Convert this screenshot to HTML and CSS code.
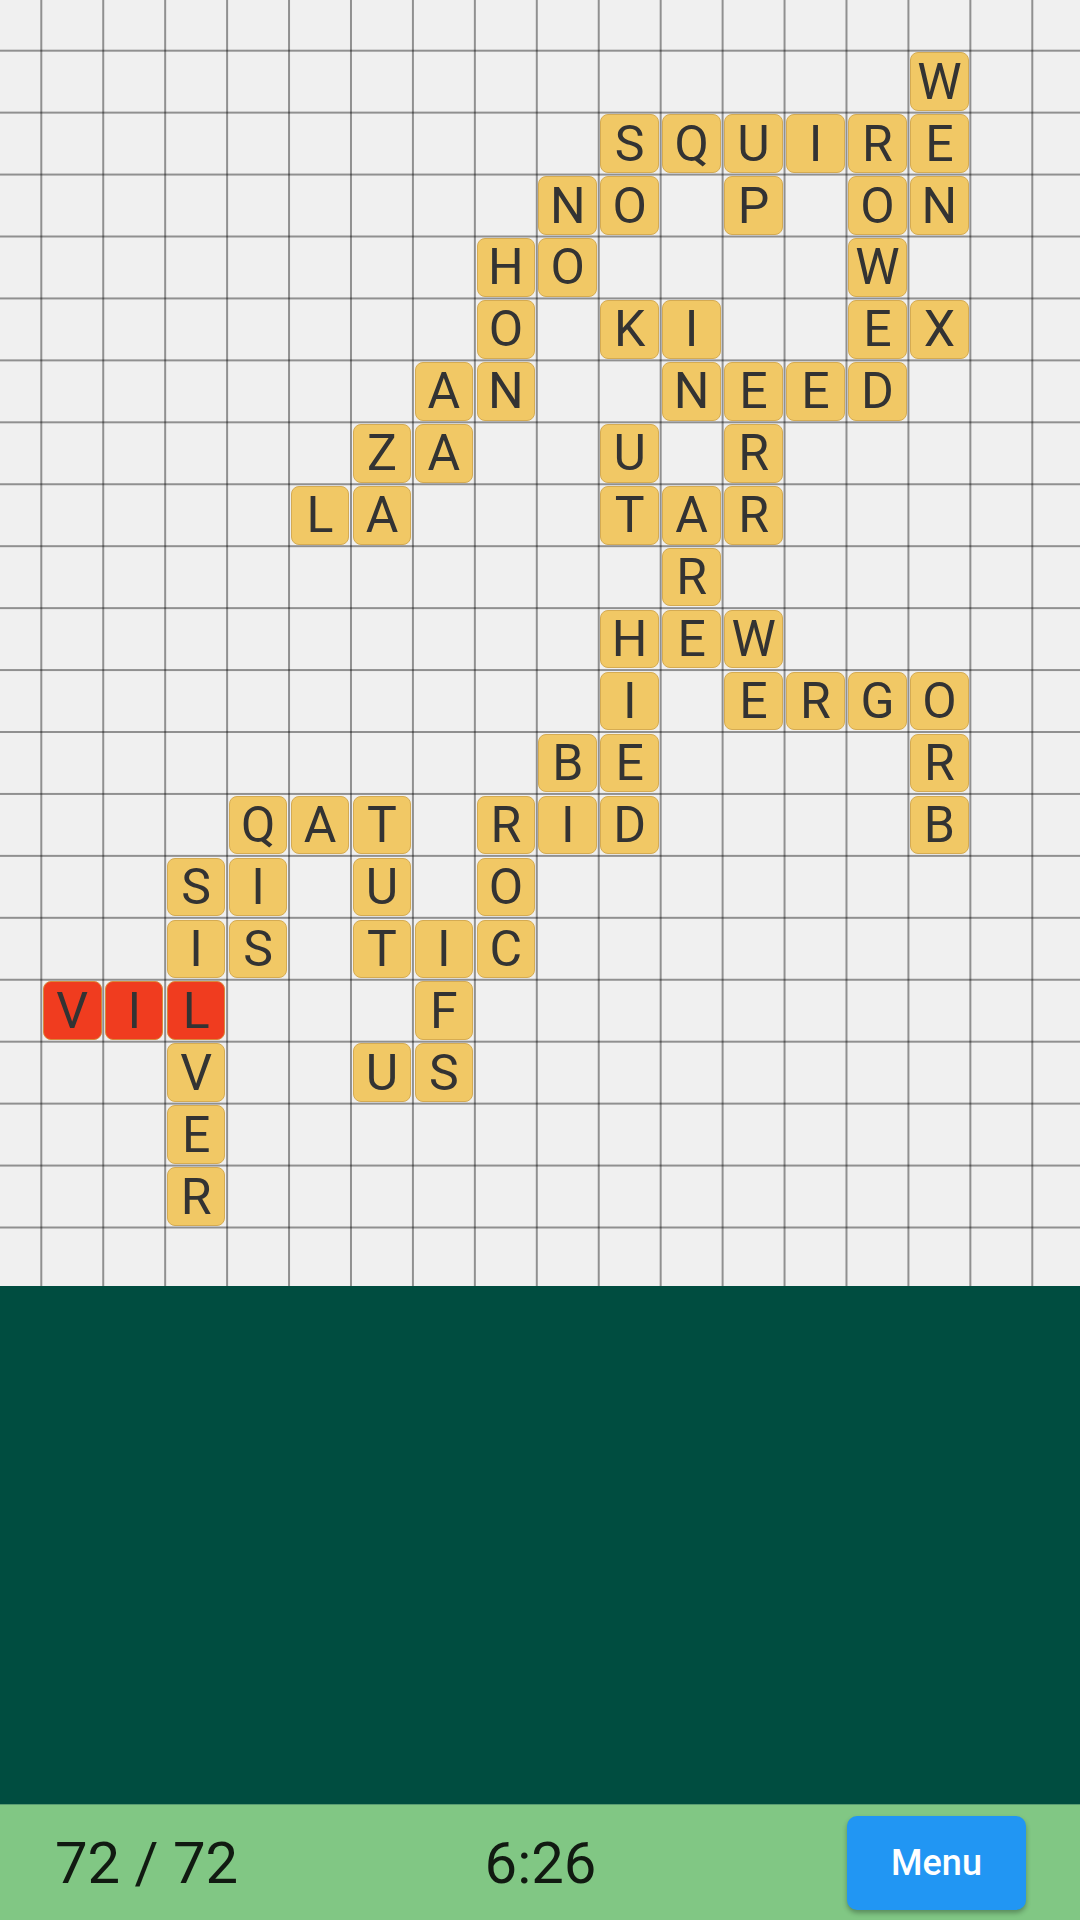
FILE: index.html
```html
<!DOCTYPE html>
<html lang="en">
<head>
    <meta charset="UTF-8">
    <meta name="viewport" content="width=device-width, initial-scale=1.0">
    <title>Word Grid</title>
    <link rel="stylesheet" href="styles.css">
</head>
<body>
    <div class="board" id="board"></div>

    <div class="tray"></div>

    <div class="status-bar">
        <div class="score">72 / 72</div>
        <div class="timer">6:26</div>
        <button class="menu-btn">Menu</button>
    </div>

    <script>
        // '.' is an empty cell, lowercase letters are wrong tiles
        const rows = [
            "..................",
            "...............W..",
            "..........SQUIRE..",
            ".........NO.P.ON..",
            "........HO....W...",
            "........O.KI..EX..",
            ".......AN..NEED...",
            "......ZA..U.R.....",
            ".....LA...TAR.....",
            "...........R......",
            "..........HEW.....",
            "..........I.ERGO..",
            ".........BE....R..",
            "....QAT.RID....B..",
            "...SI.U.O.........",
            "...IS.TIC.........",
            ".vil...F..........",
            "...V..US..........",
            "...E..............",
            "...R..............",
            ".................."
        ];

        const board = document.getElementById("board");

        rows.forEach(row => {
            for (const ch of row) {
                const cell = document.createElement("div");
                cell.className = "cell";
                if (ch !== ".") {
                    const tile = document.createElement("div");
                    tile.className = "tile";
                    if (ch === ch.toLowerCase()) {
                        tile.classList.add("wrong");
                    }
                    tile.textContent = ch.toUpperCase();
                    cell.appendChild(tile);
                }
                board.appendChild(cell);
            }
        });
    </script>
</body>
</html>
```

FILE: styles.css
```css
body {
    margin: 0;
    font-family: Roboto, "Liberation Sans", Arial, sans-serif;
    display: flex;
    flex-direction: column;
    height: 1920px;
    width: 1080px;
    overflow: hidden;
}

.board {
    height: 1286px;
    flex-shrink: 0;
    display: grid;
    grid-template-columns: 41.3px repeat(16, 61.94px) 1fr;
    grid-template-rows: 50.7px repeat(19, 61.94px) 1fr;
    background-color: #f0f0f0;
    background-image:
        linear-gradient(to right, rgba(0, 0, 0, 0.4) 2px, transparent 2px),
        linear-gradient(to bottom, rgba(0, 0, 0, 0.4) 2px, transparent 2px);
    background-size: 61.94px 61.94px;
    background-position: 40.3px 49.7px;
}

.cell {
    padding: 1.7px;
    box-sizing: border-box;
    min-width: 0;
    min-height: 0;
}

.tile {
    height: 100%;
    box-sizing: border-box;
    background: #f1c865;
    border: 1px solid #d5ab52;
    border-radius: 8px;
    display: flex;
    justify-content: center;
    align-items: center;
    font-size: 50px;
    color: #333;
}

.tile.wrong {
    background: #f03c1f;
    border-color: #d9883a;
}

.tray {
    flex: 1;
    background: #004d40;
}

.status-bar {
    height: 116px;
    flex-shrink: 0;
    box-sizing: border-box;
    border-top: 1px solid #5a9c72;
    background: #81c784;
    display: grid;
    grid-template-columns: 1fr auto 1fr;
    align-items: center;
    padding: 0 54px 0 55px;
}

.score,
.timer {
    font-size: 58px;
    color: rgba(0, 0, 0, 0.87);
}

.menu-btn {
    justify-self: end;
    width: 179px;
    height: 94px;
    border: none;
    border-radius: 10px;
    background: #2196f3;
    color: #fff;
    font-family: Roboto, "Liberation Sans", Arial, sans-serif;
    font-size: 36px;
    font-weight: 500;
    box-shadow: 0 3px 5px rgba(0, 0, 0, 0.3);
    cursor: pointer;
}
```
